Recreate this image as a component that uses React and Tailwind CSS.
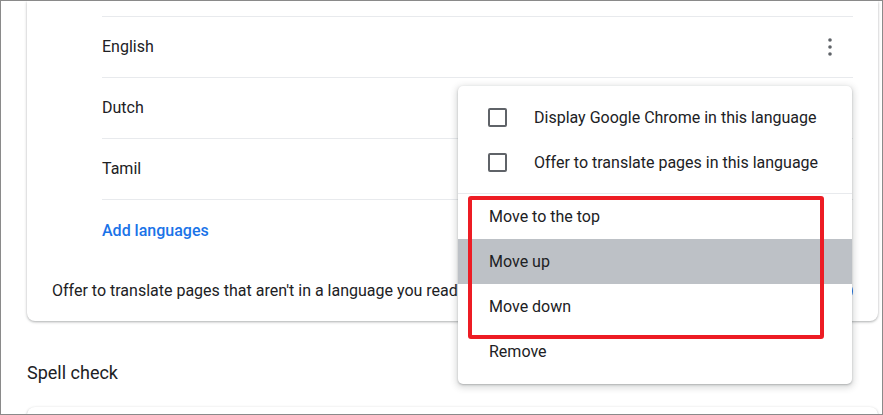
import React from 'react';

const languages = ['English', 'Dutch', 'Tamil'];

function Kebab() {
  return (
    <svg width="4" height="18" viewBox="0 0 4 18" className="block">
      <circle cx="2" cy="2" r="1.8" fill="#5f6368" />
      <circle cx="2" cy="9" r="1.8" fill="#5f6368" />
      <circle cx="2" cy="16" r="1.8" fill="#5f6368" />
    </svg>
  );
}

function Checkbox() {
  return <div className="w-[19px] h-[19px] rounded-[2px] border-2 border-[#5f6368] flex-shrink-0" />;
}

export default function App() {
  return (
    <div
      className="relative w-[883px] h-[415px] overflow-hidden bg-white border border-[#8a8a8a] text-[#202124]"
      style={{ fontFamily: 'Roboto, "Noto Sans", sans-serif' }}
    >
      {/* Languages card */}
      <div className="ml-[26px] w-[851px] pt-[15px] bg-white rounded-b-[8px] shadow-[0_1px_3px_rgba(60,64,67,0.3),0_1px_2px_rgba(60,64,67,0.15)]">
        <div className="ml-[75px] mr-[25px]">
          {languages.map((lang, i) => (
            <div key={lang} className="h-[61px] flex items-center justify-between border-t border-[#e8eaed] text-[16px]">
              <span>{lang}</span>
              {i === 0 && (
                <div className="mr-[21px]">
                  <Kebab />
                </div>
              )}
            </div>
          ))}
          <div className="h-[62px] flex items-center border-t border-[#e8eaed] text-[16px] font-medium text-[#1a73e8]">
            Add languages
          </div>
        </div>
        <div className="h-[60px] pl-[25px] pr-[25px] flex items-center justify-between text-[16px]">
          <span className="whitespace-nowrap">Offer to translate pages that aren't in a language you read</span>
          <div className="w-[36px] h-[16px] rounded-full bg-[#8ab4f8] relative flex-shrink-0">
            <div className="absolute right-0 -top-[2px] w-[20px] h-[20px] rounded-full bg-[#1a73e8]" />
          </div>
        </div>
      </div>

      <div className="ml-[26px] mt-[40px] text-[18px] leading-[24px]">Spell check</div>
      <div className="ml-[26px] mt-[22px] w-[851px] h-[40px] bg-white rounded-t-[8px] shadow-[0_1px_3px_rgba(60,64,67,0.3),0_1px_2px_rgba(60,64,67,0.15)]" />

      {/* Context menu */}
      <div className="absolute left-[457px] top-[85px] w-[394px] h-[298px] bg-white rounded-[5px] shadow-[0_2px_6px_2px_rgba(60,64,67,0.18),0_1px_2px_rgba(60,64,67,0.3)] text-[16px]">
        <div className="pt-[9px] pb-[8px]">
          <div className="h-[45px] flex items-center px-[30px] gap-[27px]">
            <Checkbox />
            <span>Display Google Chrome in this language</span>
          </div>
          <div className="h-[45px] flex items-center px-[30px] gap-[27px]">
            <Checkbox />
            <span>Offer to translate pages in this language</span>
          </div>
        </div>
        <div className="border-t border-[#e8eaed]">
          <div className="h-[45px] flex items-center px-[31px]">Move to the top</div>
          <div className="h-[45px] flex items-center px-[31px] bg-[#bdc1c6]">Move up</div>
          <div className="h-[45px] flex items-center px-[31px]">Move down</div>
          <div className="h-[45px] flex items-center px-[31px]">Remove</div>
        </div>
      </div>

      {/* Highlight annotation */}
      <div className="absolute left-[467px] top-[195px] w-[356px] h-[143px] border-[4px] border-[#ed1c24] rounded-[3px]" />
    </div>
  );
}
